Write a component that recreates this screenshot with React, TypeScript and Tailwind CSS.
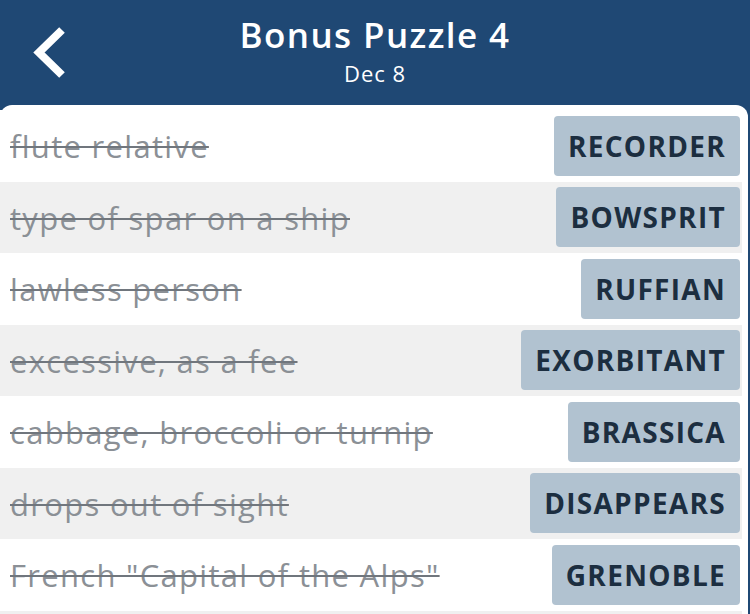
const clues = [
  { clue: "flute relative", answer: "RECORDER" },
  { clue: "type of spar on a ship", answer: "BOWSPRIT" },
  { clue: "lawless person", answer: "RUFFIAN" },
  { clue: "excessive, as a fee", answer: "EXORBITANT" },
  { clue: "cabbage, broccoli or turnip", answer: "BRASSICA" },
  { clue: "drops out of sight", answer: "DISAPPEARS" },
  { clue: 'French "Capital of the Alps"', answer: "GRENOBLE" },
  { clue: "", answer: "" },
];

function BackIcon() {
  return (
    <svg width="40" height="56" viewBox="0 0 40 56" className="block">
      <path
        d="M31 5 L8 27.5 L31 50"
        fill="none"
        stroke="white"
        strokeWidth="8"
        strokeLinecap="butt"
        strokeLinejoin="miter"
      />
    </svg>
  );
}

export default function App() {
  return (
    <div className="w-[750px] h-[614px] overflow-hidden bg-[#1f4874] font-['Open_Sans',sans-serif]">
      {/* Header */}
      <header className="h-[105px] flex items-center relative">
        <button className="absolute left-[31px] top-[25px]" aria-label="Back">
          <BackIcon />
        </button>
        <div className="flex-1 flex flex-col items-center -mt-[4px]">
          <h1 className="text-white text-[35px] font-semibold leading-[40px] tracking-[1.4px]">
            Bonus Puzzle 4
          </h1>
          <p className="text-white text-[22px] leading-[28px] mt-[4px] tracking-[1px]">Dec 8</p>
        </div>
      </header>

      {/* List */}
      <div className="bg-white rounded-t-[12px] w-[748px] h-[509px] pt-[5px] pr-[6px]">
        {clues.map((c, i) => (
          <div
            key={i}
            className={`h-[71.5px] flex items-center justify-between pl-[10px] pr-[2px] ${
              i % 2 === 1 ? "bg-[#f0f0f0]" : "bg-white"
            }`}
          >
            <span className="text-[31px] tracking-[1.3px] text-[#8b9096] line-through decoration-[2px] decoration-[#70767d] pt-[1px]">
              {c.clue}
            </span>
            {c.answer && (
              <span className="h-[60px] flex items-center px-[14px] rounded-[4px] bg-[#b1c2d0] text-[#1c2e40] text-[28px] font-bold tracking-[1.3px]">
                {c.answer}
              </span>
            )}
          </div>
        ))}
      </div>
    </div>
  );
}
